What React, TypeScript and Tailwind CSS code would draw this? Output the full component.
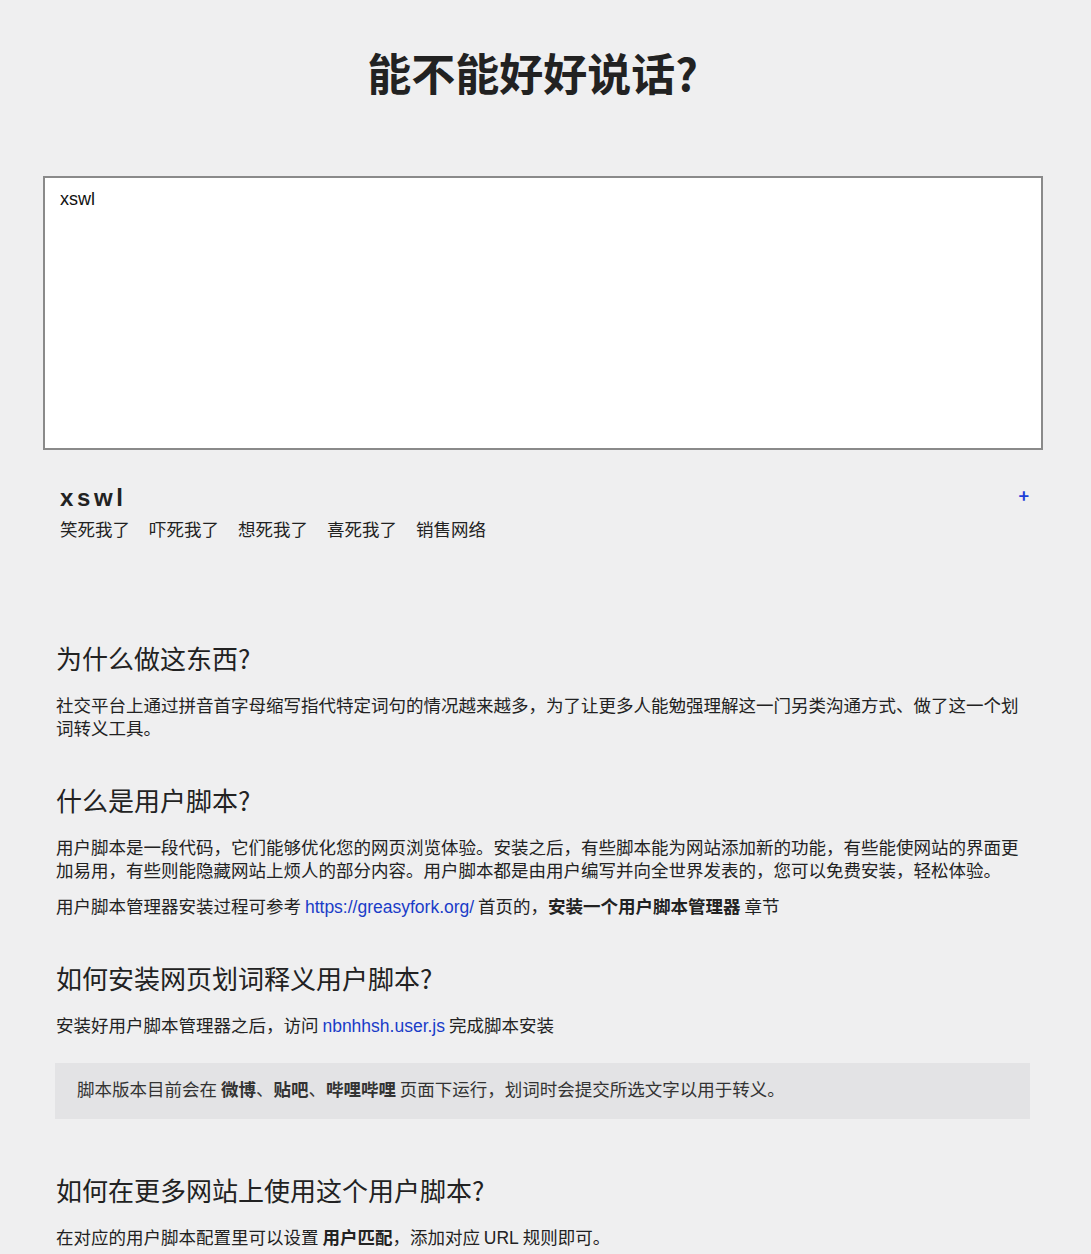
import React from "react";

const cjk = { fontFamily: '"Noto Sans CJK SC", "Noto Sans", sans-serif' };
const latin = { fontFamily: '"Liberation Sans", Arial, "Noto Sans CJK SC", sans-serif' };

export default function App() {
  const tags = ["笑死我了", "吓死我了", "想死我了", "喜死我了", "销售网络"];
  return (
    <div className="min-h-[1254px] bg-[#efeff0] text-[#222222]" style={cjk}>
      <h1 className="pt-[46px] text-center text-[44px] leading-[52px] font-bold text-[#222222] pr-[26px]">
        能不能好好说话?
      </h1>

      <div className="ml-[43px] mt-[78px] w-[1000px] h-[274px] border-2 border-[#8a8a8a] bg-white px-[15px] py-[9px]">
        <div className="text-[18px] leading-[24px] text-[#111111]" style={latin}>
          xswl
        </div>
      </div>

      <div className="ml-[43px] mt-[33px] w-[1000px] pl-[17px] pr-[14px] flex justify-between">
        <div>
          <div className="text-[24px] leading-[30px] font-bold tracking-[3.6px] text-[#222222]" style={latin}>
            xswl
          </div>
          <div className="mt-[4px] flex gap-[19px] text-[17.5px] leading-[24px]">
            {tags.map((t) => (
              <span key={t}>{t}</span>
            ))}
          </div>
        </div>
        <div className="pt-[2px] text-[#1d3fd8] text-[18px] leading-[20px] font-bold">+</div>
      </div>

      <div className="ml-[56px] w-[974px] text-[17.5px] leading-[22.5px]">
        <h2 className="mt-[100px] text-[26px] leading-[34px]">为什么做这东西?</h2>
        <p className="mt-[19px]">
          社交平台上通过拼音首字母缩写指代特定词句的情况越来越多，为了让更多人能勉强理解这一门另类沟通方式、做了这一个划词转义工具。
        </p>

        <h2 className="mt-[44px] text-[26px] leading-[34px]">什么是用户脚本?</h2>
        <p className="mt-[19px]">
          用户脚本是一段代码，它们能够优化您的网页浏览体验。安装之后，有些脚本能为网站添加新的功能，有些能使网站的界面更加易用，有些则能隐藏网站上烦人的部分内容。用户脚本都是由用户编写并向全世界发表的，您可以免费安装，轻松体验。
        </p>
        <p className="mt-[14px]">
          用户脚本管理器安装过程可参考{" "}
          <a className="text-[#1a3cc8]" style={latin}>
            https://greasyfork.org/
          </a>{" "}
          首页的，<b>安装一个用户脚本管理器</b> 章节
        </p>

        <h2 className="mt-[42px] text-[26px] leading-[34px]">如何安装网页划词释义用户脚本?</h2>
        <p className="mt-[19px]">
          安装好用户脚本管理器之后，访问{" "}
          <a className="text-[#1a3cc8]" style={latin}>
            nbnhhsh.user.js
          </a>{" "}
          完成脚本安装
        </p>

        <div className="mt-[26px] -ml-px h-[56px] bg-[#e3e3e5] pl-[22px] flex items-center pb-[3px] text-[#333333]">
          <span>
            脚本版本目前会在 <b>微博</b>、<b>贴吧</b>、<b>哔哩哔哩</b> 页面下运行，划词时会提交所选文字以用于转义。
          </span>
        </div>

        <h2 className="mt-[54px] text-[26px] leading-[34px]">如何在更多网站上使用这个用户脚本?</h2>
        <p className="mt-[19px]">
          在对应的用户脚本配置里可以设置 <b>用户匹配</b>，添加对应 <span style={latin}>URL</span> 规则即可。
        </p>
      </div>
    </div>
  );
}
